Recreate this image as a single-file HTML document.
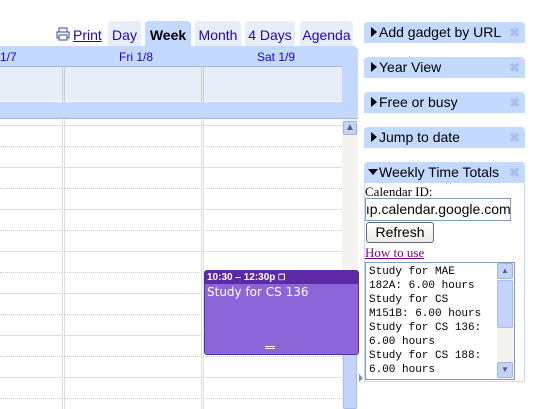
<!DOCTYPE html>
<html><head><style>
*{margin:0;padding:0;box-sizing:border-box}
body{width:543px;height:409px;overflow:hidden;background:#fff;font-family:"Liberation Sans",Arial,sans-serif;position:relative}
.a{position:absolute}
.tab{position:absolute;top:21px;height:25px;background:#e8eef7;border-radius:4px 4px 0 0;color:#2200cc;font-size:14px;text-align:center;line-height:28px}
.hl{position:absolute;left:0;width:342px;height:1px;background:#ddd}
.dl{position:absolute;left:0;width:342px;height:0;border-top:1px dotted #ccc}
.g{position:absolute;left:364px;width:161px;height:21px;background:#c3d9ff;border-radius:4px 4px 0 0;font-size:14px;line-height:21px;color:#000}
.g .t{position:absolute;left:7px;top:5px;width:0;height:0;border-top:5px solid transparent;border-bottom:5px solid transparent;border-left:6px solid #000}
.g .d{position:absolute;left:4px;top:7px;width:0;height:0;border-left:5px solid transparent;border-right:5px solid transparent;border-top:6px solid #000}
.g .n{position:absolute;left:15px}
.g .x{position:absolute;right:5px;top:0;color:#a9c0e8;font-size:13px;font-weight:bold}
</style></head><body>
<svg class="a" style="left:56px;top:27px" width="14" height="14" viewBox="0 0 14 14"><rect x="3" y="1" width="8" height="4" fill="none" stroke="#2a4fa0"/><rect x="1" y="5" width="12" height="6" fill="none" stroke="#2a4fa0"/><rect x="3" y="8" width="8" height="5" fill="#fff" stroke="#2a4fa0"/></svg>
<div class="a" style="left:73px;top:27px;font-size:14px;color:#2200cc;text-decoration:underline">Print</div>
<div class="tab" style="left:108px;width:33px">Day</div>
<div class="tab" style="left:145px;width:46px;background:#c3d9ff;color:#000;font-weight:bold">Week</div>
<div class="tab" style="left:195px;width:46px">Month</div>
<div class="tab" style="left:245px;width:50px">4 Days</div>
<div class="tab" style="left:300px;width:53px">Agenda</div>
<div class="a" style="left:0;top:46px;width:358px;height:73px;background:#c3d9ff;border-radius:0 5px 0 0;border-bottom:1px solid #9fb7e0"></div>
<div class="a" style="left:0;top:50px;font-size:12px;color:#2200cc">1/7</div>
<div class="a" style="left:119px;top:50px;font-size:12px;color:#2200cc">Fri 1/8</div>
<div class="a" style="left:257px;top:50px;font-size:12px;color:#2200cc">Sat 1/9</div>
<div class="a" style="left:0;top:66px;width:342px;height:36px;background:#e8eef7;border-top:1px solid #9fb7e0;border-bottom:1px solid #fff"></div>
<div class="a" style="left:62px;top:66px;width:3px;height:36px;border-left:1px solid #ccc;border-right:1px solid #ccc"></div>
<div class="a" style="left:201px;top:66px;width:3px;height:36px;border-left:1px solid #ccc;border-right:1px solid #ccc"></div>
<div class="hl" style="top:125px"></div><div class="hl" style="top:167px"></div><div class="hl" style="top:209px"></div><div class="hl" style="top:251px"></div><div class="hl" style="top:293px"></div><div class="hl" style="top:335px"></div><div class="hl" style="top:377px"></div>
<div class="dl" style="top:146px"></div><div class="dl" style="top:188px"></div><div class="dl" style="top:230px"></div><div class="dl" style="top:272px"></div><div class="dl" style="top:314px"></div><div class="dl" style="top:356px"></div><div class="dl" style="top:398px"></div>
<div class="a" style="left:62px;top:119px;width:3px;height:290px;border-left:1px solid #ddd;border-right:1px solid #ddd;background:#fff"></div>
<div class="a" style="left:201px;top:119px;width:3px;height:290px;border-left:1px solid #ddd;border-right:1px solid #ddd;background:#fff"></div>
<div class="a" style="left:342px;top:119px;width:16px;height:290px;background:#f4f3ee"></div>
<div class="a" style="left:343px;top:121px;width:14px;height:14px;background:#c3d3f5;border:1px solid #a0b5e0;border-radius:2px;color:#4d6185;font-size:10px;text-align:center;line-height:12px">&#9650;</div>
<div class="a" style="left:343px;top:295px;width:14px;height:114px;background:#c3d3f9;border:1px solid #a8bde8;border-radius:2px"></div>
<div class="a" style="left:359px;top:374px;width:0;height:0;border-top:4px solid transparent;border-bottom:4px solid transparent;border-left:4px solid #6f8fd0"></div>
<div class="a" style="left:204px;top:270px;width:155px;height:85px;background:#8c66d9;border:1px solid #5a2fa0;border-radius:3px;overflow:hidden">
<div style="background:#5b2aa6;height:13px;color:#fff;font-size:10px;font-weight:bold;padding-left:2px;line-height:13px">10:30 – 12:30p <span style="font-size:8px">&#x2750;</span></div>
<div style="color:#fff;font-size:12px;padding-left:2px;font-family:'DejaVu Sans',sans-serif;line-height:17px">Study for CS 136</div>
<div class="a" style="left:60px;top:75px;width:10px;height:3px;border-top:1px solid #fff;border-bottom:1px solid #fff"></div>
</div>
<div class="g" style="top:22px"><span class="t"></span><span class="n">Add gadget by URL</span><span class="x">&#x2716;</span></div>
<div class="g" style="top:57px"><span class="t"></span><span class="n">Year View</span><span class="x">&#x2716;</span></div>
<div class="g" style="top:92px"><span class="t"></span><span class="n">Free or busy</span><span class="x">&#x2716;</span></div>
<div class="g" style="top:127px"><span class="t"></span><span class="n">Jump to date</span><span class="x">&#x2716;</span></div>
<div class="g" style="top:162px"><span class="d"></span><span class="n">Weekly Time Totals</span><span class="x">&#x2716;</span></div>
<div class="a" style="left:364px;top:182px;width:161px;height:200px;border:1px solid #c3d9ff;border-top:none"></div>
<div class="a" style="left:365px;top:184px;font-family:'Liberation Serif',serif;font-size:13px">Calendar ID:</div>
<div class="a" style="left:365px;top:198px;width:146px;height:23px;border:1px solid #7f9db9;font-size:14px;line-height:21px;overflow:hidden;white-space:nowrap;text-indent:-4px">&nbsp;ıp.calendar.google.com</div>
<div class="a" style="left:366px;top:222px;width:68px;height:21px;border:1px solid #5a6a80;border-radius:3px;background:linear-gradient(#fff,#ecebe6);font-size:14px;text-align:center;line-height:19px">Refresh</div>
<div class="a" style="left:365px;top:245px;font-family:'Liberation Serif',serif;font-size:13px;color:#800080;text-decoration:underline">How to use</div>
<div class="a" style="left:365px;top:262px;width:150px;height:118px;border:1px solid #7f9db9;font-family:'Liberation Mono',monospace;font-size:11px;line-height:14px;padding:2px 0 0 3px;white-space:pre;overflow:hidden">Study for MAE
182A: 6.00 hours
Study for CS
M151B: 6.00 hours
Study for CS 136:
6.00 hours
Study for CS 188:
6.00 hours</div>
<div class="a" style="left:497px;top:263px;width:17px;height:116px;background:#f4f3ee"></div>
<div class="a" style="left:497px;top:263px;width:16px;height:16px;background:#c3d3f5;border:1px solid #a0b5e0;border-radius:2px;font-size:8px;text-align:center;line-height:14px;color:#4d6185">&#9650;</div>
<div class="a" style="left:497px;top:280px;width:16px;height:48px;background:#c3d3f9;border:1px solid #a8bde8;border-radius:2px"></div>
<div class="a" style="left:497px;top:362px;width:16px;height:16px;background:#c3d3f5;border:1px solid #a0b5e0;border-radius:2px;font-size:8px;text-align:center;line-height:14px;color:#4d6185">&#9660;</div>
</body></html>
